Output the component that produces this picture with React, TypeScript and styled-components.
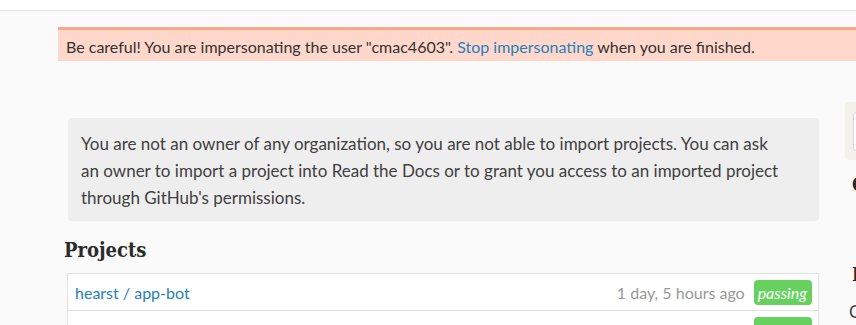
import React from 'react';
import styled, {createGlobalStyle} from "styled-components";

const GlobalStyle = createGlobalStyle`
  html, body {
    margin: 0;
    padding: 0;
    background: #fafafa;
    font-family: Lato, "Liberation Sans", sans-serif;
    color: #333;
    overflow: hidden;
  }
`

const projects = [
    {name: 'hearst / app-bot', built: '1 day, 5 hours ago', status: 'passing'},
    {name: 'hearst / app-web', built: '2 days, 1 hour ago', status: 'passing'},
]

export default function App() {
    return (
        <>
            <GlobalStyle/>
            <Header/>
            <Page>
                <Alert>
                    Be careful! You are impersonating the user "cmac4603". <Link>Stop impersonating</Link> when you are finished.
                </Alert>
                <Columns>
                    <Main>
                        <InfoBox>
                            You are not an owner of any organization, so you are not able to import projects. You can ask
                            an owner to import a project into Read the Docs or to grant you access to an imported project
                            through GitHub's permissions.
                        </InfoBox>
                        <Heading>Projects</Heading>
                        <ProjectList>
                            {projects.map(p => (
                                <ProjectRow key={p.name}>
                                    <Link>{p.name}</Link>
                                    <RowMeta>
                                        <BuiltAt>{p.built}</BuiltAt>
                                        <Badge>{p.status}</Badge>
                                    </RowMeta>
                                </ProjectRow>
                            ))}
                        </ProjectList>
                    </Main>
                    <Sidebar>
                        <SearchBox>
                            <SearchInput/>
                        </SearchBox>
                        <SideHeading>Categories</SideHeading>
                        <SideHeading $gap={66}>Imported</SideHeading>
                        <SideText>Contributing</SideText>
                    </Sidebar>
                </Columns>
            </Page>
        </>
    );
}

const Header = styled.header`
  height: 10px;
  background: #fff;
  border-bottom: 1px solid #e6e6e6;
`

const Page = styled.div`
  padding-left: 58px;
`

const Alert = styled.div`
  margin-top: 16px;
  border-top: 3px solid #fca68a;
  background: #ffd8cb;
  padding: 8px 8px 5px;
  font-size: 16px;
  line-height: 18px;
  white-space: nowrap;
  color: #333;
`

const Link = styled.a`
  color: #2980b9;
  cursor: pointer;
`

const Columns = styled.div`
  display: flex;
  gap: 26px;
  padding-left: 6px;
`

const Main = styled.div`
  width: 755px;
  flex-shrink: 0;
`

const InfoBox = styled.div`
  margin: 57px 0 0 4px;
  background: #eeeeee;
  border-radius: 4px;
  padding: 12px 34px 10px 13px;
  font-size: 17px;
  line-height: 27px;
  color: #404040;
`

const Heading = styled.h2`
  margin: 15px 0 9px;
  font-family: "DejaVu Serif Condensed", "DejaVu Serif", serif;
  font-weight: bold;
  font-size: 20px;
  line-height: 28px;
  color: #2b2b2b;
`

const ProjectList = styled.ul`
  list-style: none;
  margin: 0 0 0 3px;
  padding: 0;
  border: 1px solid #e1e1e1;
  background: #fff;
`

const ProjectRow = styled.li`
  display: flex;
  align-items: center;
  justify-content: space-between;
  height: 36px;
  padding: 0 6px 0 7px;
  font-size: 16px;
  & + & {
    border-top: 1px solid #e1e1e1;
  }
`

const RowMeta = styled.div`
  display: flex;
  align-items: center;
  gap: 9px;
`

const BuiltAt = styled.span`
  color: #999;
`

const Badge = styled.span`
  background: #66d15f;
  color: #fff;
  font-style: italic;
  border-radius: 4px;
  padding: 4px 5px 3px 4px;
  line-height: 18px;
`

const Sidebar = styled.aside`
  padding-top: 41px;
  flex-shrink: 0;
  width: 200px;
`

const SearchBox = styled.div`
  background: #f3f1ea;
  border-radius: 4px;
  padding: 10px 8px 9px;
  height: 39px;
`

const SearchInput = styled.div`
  height: 37px;
  background: #fff;
  border: 1px solid #d8d8d8;
  border-radius: 3px;
`

const SideHeading = styled.h3<{$gap?: number}>`
  margin: ${p => p.$gap ?? 13}px 0 0 7px;
  font-family: "DejaVu Serif Condensed", "DejaVu Serif", serif;
  font-weight: bold;
  font-size: 18px;
  line-height: 24px;
  color: #2b2b2b;
`

const SideText = styled.p`
  margin: 14px 0 0 4px;
  font-size: 17px;
  color: #404040;
`
